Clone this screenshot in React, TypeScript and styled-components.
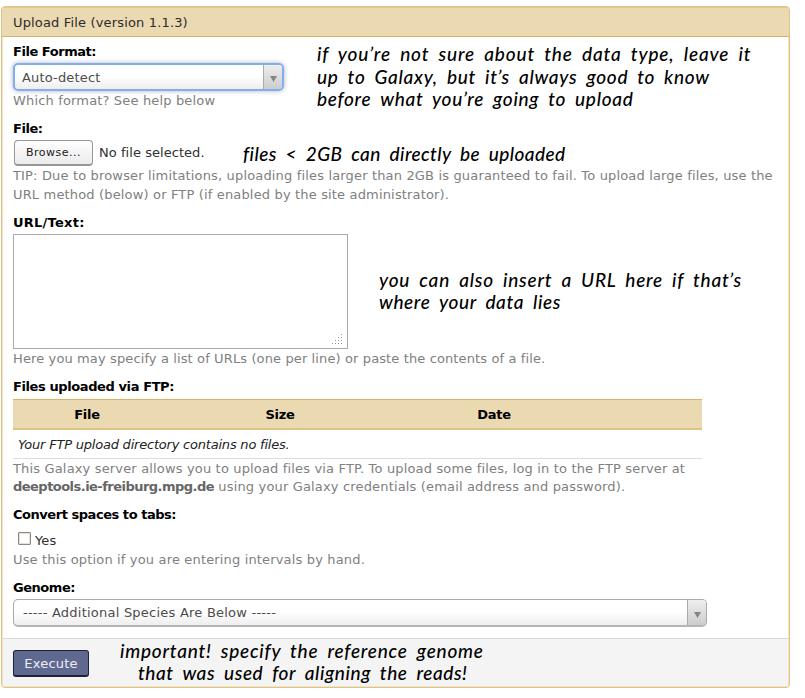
import React from "react";
import styled, { createGlobalStyle } from "styled-components";

const GlobalStyle = createGlobalStyle`
  * { box-sizing: border-box; }
  body { margin: 0; background: #fff; }
`;

const Page = styled.main`
  padding: 6px 0 0 1px;
  font: 13px/19px "DejaVu Sans", Verdana, sans-serif;
  letter-spacing: 0.16px;
  color: #303030;
  white-space: nowrap;
`;

const Panel = styled.form`
  position: relative;
  display: flex;
  flex-direction: column;
  width: 789px;
  height: 682px;
  border: 1px solid #dfc384;
  box-shadow: inset 0 0 0 1px #f0e3c6;
  padding: 1px;
  border-radius: 4px;
  overflow: hidden;
`;

const Header = styled.header`
  height: 30px;
  margin: -1px -1px 0;
  padding: 5px 11px 0;
  border-top: 1px solid #e3c88f;
  border-bottom: 1px solid #d8b365;
  background: #ebd9b2;
  color: #2c2c2c;
`;

const Fields = styled.div`
  flex: 1;
  display: flex;
  flex-direction: column;
  align-items: flex-start;
  gap: 9px;
  padding: 5px 10px 0;
`;

const Field = styled.section`
  display: flex;
  flex-direction: column;
  align-items: flex-start;
`;

const Label = styled.label<{ $gap?: number; $tracking?: number }>`
  height: 19px;
  margin-bottom: ${(p) => p.$gap ?? 2}px;
  color: #000;
  font-weight: bold;
  letter-spacing: ${(p) => p.$tracking ?? -0.46}px;
`;

const Help = styled.p<{ $leading?: number; $top?: number; $tracking?: number }>`
  margin: ${(p) => p.$top ?? 0}px 0 0;
  line-height: ${(p) => p.$leading ?? 19}px;
  letter-spacing: ${(p) => p.$tracking ?? 0.16}px;
  color: #808080;
`;

const Host = styled.strong`
  color: #666;
  letter-spacing: -0.53px;
`;

const Select = styled.div<{ $width: number; $focused?: boolean }>`
  display: flex;
  width: ${(p) => p.$width}px;
  height: 28px;
  border: ${(p) => (p.$focused ? "2px solid #80adf5" : "1px solid #aaa")};
  border-bottom-width: 2px;
  border-bottom-color: ${(p) => (p.$focused ? "#80adf5" : "#b5b5b5")};
  border-radius: 5px;
  background: linear-gradient(#fff 0%, #fff 45%, #eee 100%);
  box-shadow: ${(p) => (p.$focused ? "0 0 5px rgba(0, 0, 0, 0.3)" : "none")};
  color: #4c4c4c;
`;

const Value = styled.span<{ $inset: number; $tracking?: number }>`
  flex: 1;
  padding-left: ${(p) => p.$inset}px;
  line-height: 25px;
  letter-spacing: ${(p) => p.$tracking ?? 0.16}px;
`;

const Arrow = styled.span`
  display: flex;
  align-items: center;
  justify-content: center;
  width: 19px;
  padding-top: 4px;
  border-left: 1px solid #aaa;
  border-radius: 0 3px 3px 0;
  background: linear-gradient(#eee, #ccc);
`;

const Picker = styled.div`
  display: flex;
  align-items: center;
  height: 27px;
  gap: 6px;
  letter-spacing: 0.05px;
`;

const Browse = styled.button`
  width: 79px;
  height: 26px;
  margin-left: 1px;
  padding: 0;
  border: 1px solid #9a9692;
  border-bottom: 2px solid #9a9692;
  border-radius: 4px;
  background: linear-gradient(#fefefe, #ebebeb);
  color: #202020;
  font: 11px "DejaVu Sans", sans-serif;
  letter-spacing: 0.5px;
`;

const TextBox = styled.div`
  display: flex;
  align-items: flex-end;
  justify-content: flex-end;
  width: 335px;
  height: 115px;
  padding: 0 4px 3px 0;
  border: 1px solid #aaa;
`;

const Table = styled.table`
  width: 689px;
  border-collapse: separate;
  border-spacing: 0;
  table-layout: fixed;
`;

const HeadCell = styled.th<{ $width: number }>`
  width: ${(p) => p.$width}px;
  height: 31px;
  padding: 0;
  border-top: 1px solid #d8b365;
  border-bottom: 2px solid #dfc384;
  background: #ebd9b2;
  color: #000;
  letter-spacing: -0.3px;
`;

const EmptyCell = styled.td`
  height: 29px;
  padding: 0 5px;
  border-bottom: 1px solid #ddd;
  color: #222;
  font-style: italic;
  letter-spacing: -0.21px;
`;

const CheckRow = styled.div`
  display: flex;
  gap: 4px;
  height: 23px;
  padding-left: 5px;
  line-height: 28px;
`;

const CheckBox = styled.span`
  width: 13px;
  height: 13px;
  margin-top: 5px;
  border: 1px solid #8c8780;
  border-radius: 1px;
  background: #fff;
  box-shadow: inset 0 0 0 1px #e2e0dd;
`;

const Footer = styled.footer`
  height: 48px;
  padding: 11px 10px;
  border-top: 1px solid #d9d9d9;
  background: #f4f4f4;
`;

const Execute = styled.button`
  width: 76px;
  height: 27px;
  padding: 0;
  border: 1px solid #1f2137;
  border-width: 1px 1px 2px;
  border-radius: 3px;
  background: #5f6990;
  color: #eceef5;
  font: 13px "DejaVu Sans", sans-serif;
  letter-spacing: 0.2px;
`;

/* Handwritten remarks laid over the form. */
const Note = styled.aside<{ $x: number; $y: number; $leading?: number }>`
  position: absolute;
  left: ${(p) => p.$x}px;
  top: ${(p) => p.$y}px;
  color: #000;
  font: italic 500 19px Lato, sans-serif;
  line-height: ${(p) => p.$leading ?? 22}px;
  word-spacing: 4px;
`;

const NoteLine = styled.div<{ $tracking: number; $indent?: number }>`
  padding-left: ${(p) => p.$indent ?? 0}px;
  letter-spacing: ${(p) => p.$tracking}px;
`;

const Triangle = () => (
  <svg width="7" height="6" viewBox="0 0 7 6">
    <path d="M0 0h7L3.5 6z" fill="#858585" />
  </svg>
);

const Grip = () => (
  <svg width="12" height="12" viewBox="0 0 12 12" fill="#999">
    {[0, 1, 2, 3].flatMap((row) =>
      Array.from({ length: row + 1 }, (_, i) => (
        <rect key={`${row}-${i}`} x={10 - i * 3} y={row * 3 + 1} width="1" height="1" />
      ))
    )}
  </svg>
);

export default function App() {
  return (
    <Page>
      <GlobalStyle />
      <Panel>
        <Header>Upload File (version 1.1.3)</Header>
        <Fields>
          <Field>
            <Label>File Format:</Label>
            <Select $width={271} $focused>
              <Value $inset={7}>Auto-detect</Value>
              <Arrow><Triangle /></Arrow>
            </Select>
            <Help>Which format? See help below</Help>
          </Field>
          <Field>
            <Label $gap={1}>File:</Label>
            <Picker>
              <Browse type="button">Browse...</Browse>
              <span>No file selected.</span>
            </Picker>
            <Help>
              TIP: Due to browser limitations, uploading files larger than 2GB is guaranteed to fail. To upload large files, use the
              <br />
              URL method (below) or FTP (if enabled by the site administrator).
            </Help>
          </Field>
          <Field>
            <Label $tracking={0.25}>URL/Text:</Label>
            <TextBox><Grip /></TextBox>
            <Help $tracking={0.12}>Here you may specify a list of URLs (one per line) or paste the contents of a file.</Help>
          </Field>
          <Field>
            <Label $gap={3} $tracking={-0.4}>Files uploaded via FTP:</Label>
            <Table>
              <thead>
                <tr>
                  <HeadCell $width={148}>File</HeadCell>
                  <HeadCell $width={238}>Size</HeadCell>
                  <HeadCell $width={190}>Date</HeadCell>
                  <HeadCell $width={113} />
                </tr>
              </thead>
              <tbody>
                <tr><EmptyCell colSpan={4}>Your FTP upload directory contains no files.</EmptyCell></tr>
              </tbody>
            </Table>
            <Help $leading={18} $top={1}>
              This Galaxy server allows you to upload files via FTP. To upload some files, log in to the FTP server at
              <br />
              <Host>deeptools.ie-freiburg.mpg.de</Host> using your Galaxy credentials (email address and password).
            </Help>
          </Field>
          <Field>
            <Label $gap={3}>Convert spaces to tabs:</Label>
            <CheckRow><CheckBox />Yes</CheckRow>
            <Help>Use this option if you are entering intervals by hand.</Help>
          </Field>
          <Field>
            <Label>Genome:</Label>
            <Select $width={694}>
              <Value $inset={9} $tracking={0.23}>----- Additional Species Are Below -----</Value>
              <Arrow><Triangle /></Arrow>
            </Select>
          </Field>
        </Fields>
        <Footer>
          <Execute type="button">Execute</Execute>
        </Footer>
        <Note $x={315} $y={36} $leading={22.5}>
          <NoteLine $tracking={0.85}>if you’re not sure about the data type, leave it</NoteLine>
          <NoteLine $tracking={0.71}>up to Galaxy, but it’s always good to know</NoteLine>
          <NoteLine $tracking={0.68}>before what you’re going to upload</NoteLine>
        </Note>
        <Note $x={241} $y={136}>
          <NoteLine $tracking={0.41}>files &lt; 2GB can directly be uploaded</NoteLine>
        </Note>
        <Note $x={377} $y={262}>
          <NoteLine $tracking={0.77}>you can also insert a URL here if that’s</NoteLine>
          <NoteLine $tracking={0.6}>where your data lies</NoteLine>
        </Note>
        <Note $x={118} $y={633}>
          <NoteLine $tracking={0.77}>important! specify the reference genome</NoteLine>
          <NoteLine $tracking={0.56} $indent={18}>that was used for aligning the reads!</NoteLine>
        </Note>
      </Panel>
    </Page>
  );
}
